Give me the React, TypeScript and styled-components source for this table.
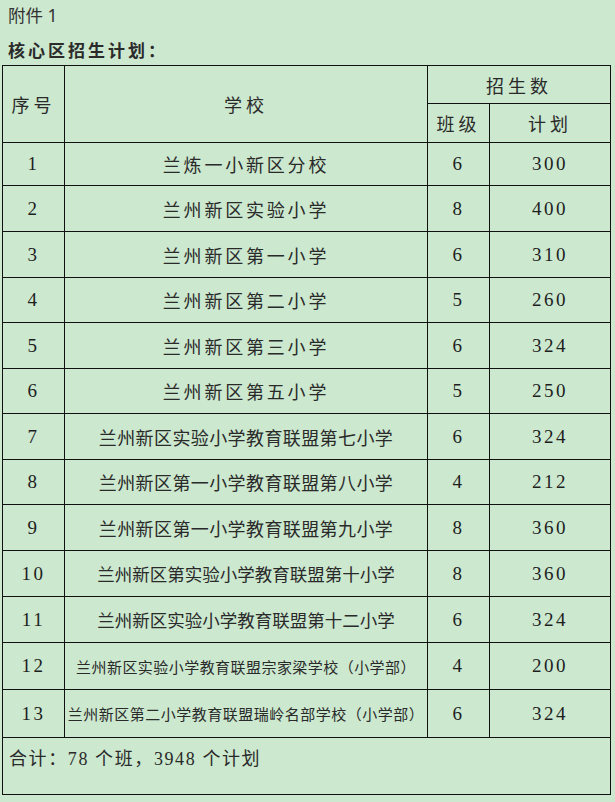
import React from "react";
import styled, { createGlobalStyle } from "styled-components";

const Global = createGlobalStyle`
  html, body {
    margin: 0;
    padding: 0;
    background: #cce8cf;
  }
  body {
    font-family: "Liberation Serif", "Noto Sans CJK SC", serif;
    color: #262626;
  }
`;

const Page = styled.div`
  width: 615px;
  height: 802px;
  background: #cce8cf;
  padding: 0 0 0 2px;
  box-sizing: border-box;
  display: flex;
  flex-direction: column;
`;

const Attach = styled.div`
  font-family: "Noto Sans", "Noto Sans CJK SC", sans-serif;
  font-size: 17.5px;
  line-height: 24px;
  height: 24px;
  padding: 3px 0 0 6px;
  color: #333;
`;

const Heading = styled.div`
  font-family: "Noto Sans CJK SC", sans-serif;
  font-weight: 700;
  font-size: 17px;
  letter-spacing: 3px;
  line-height: 24px;
  height: 24px;
  padding: 11px 0 3px 6px;
  color: #2b2b2b;
`;

const Table = styled.table`
  border-collapse: collapse;
  table-layout: fixed;
  width: 608px;
`;

const Cell = styled.td<{ $size?: number; $ls?: number; $align?: string }>`
  border: 1px solid #111;
  padding: 0;
  text-align: ${(p) => p.$align ?? "center"};
  vertical-align: middle;
  font-size: ${(p) => p.$size ?? 18}px;
  letter-spacing: ${(p) => p.$ls ?? 0}px;
  white-space: nowrap;
  overflow: hidden;
  color: #2a2a2a;
`;

const HeadCell = styled(Cell)`
  font-family: "Noto Sans CJK SC", sans-serif;
  font-size: 18px;
`;

const Num = styled(Cell)`
  font-family: "Liberation Serif", serif;
  font-size: 19px;
  letter-spacing: 2.5px;
  color: #1e1e1e;
`;

const Row = styled.tr<{ $h: number }>`
  height: ${(p) => p.$h}px;
`;

const FooterCell = styled.td`
  border: 1px solid #111;
  height: 57px;
  padding: 10px 0 0 6px;
  vertical-align: top;
  font-size: 18px;
  letter-spacing: 1.6px;
  line-height: 22px;
  color: #2a2a2a;
  box-sizing: border-box;
`;

type Item = {
  no: number;
  name: string;
  cls: number;
  plan: number;
  h: number;
  size: number;
  ls: number;
};

const items: Item[] = [
  { no: 1, name: "兰炼一小新区分校", cls: 6, plan: 300, h: 43, size: 18, ls: 2.8 },
  { no: 2, name: "兰州新区实验小学", cls: 8, plan: 400, h: 46, size: 18, ls: 2.8 },
  { no: 3, name: "兰州新区第一小学", cls: 6, plan: 310, h: 46, size: 18, ls: 2.8 },
  { no: 4, name: "兰州新区第二小学", cls: 5, plan: 260, h: 45, size: 18, ls: 2.8 },
  { no: 5, name: "兰州新区第三小学", cls: 6, plan: 324, h: 46, size: 18, ls: 2.8 },
  { no: 6, name: "兰州新区第五小学", cls: 5, plan: 250, h: 45, size: 18, ls: 2.8 },
  { no: 7, name: "兰州新区实验小学教育联盟第七小学", cls: 6, plan: 324, h: 46, size: 18, ls: 0.4 },
  { no: 8, name: "兰州新区第一小学教育联盟第八小学", cls: 4, plan: 212, h: 45, size: 18, ls: 0.4 },
  { no: 9, name: "兰州新区第一小学教育联盟第九小学", cls: 8, plan: 360, h: 46, size: 18, ls: 0.4 },
  { no: 10, name: "兰州新区第实验小学教育联盟第十小学", cls: 8, plan: 360, h: 46, size: 17.5, ls: 0 },
  { no: 11, name: "兰州新区实验小学教育联盟第十二小学", cls: 6, plan: 324, h: 46, size: 17.5, ls: 0 },
  { no: 12, name: "兰州新区实验小学教育联盟宗家梁学校（小学部）", cls: 4, plan: 200, h: 47, size: 15, ls: 0.45 },
  { no: 13, name: "兰州新区第二小学教育联盟瑞岭名部学校（小学部）", cls: 6, plan: 324, h: 48, size: 15, ls: 0.5 },
];

export default function App() {
  return (
    <Page>
      <Global />
      <Attach>附件 1</Attach>
      <Heading>核心区招生计划：</Heading>
      <Table>
        <colgroup>
          <col style={{ width: 62 }} />
          <col style={{ width: 363 }} />
          <col style={{ width: 62 }} />
          <col style={{ width: 121 }} />
        </colgroup>
        <thead>
          <Row $h={38}>
            <HeadCell rowSpan={2} $ls={4}>序号</HeadCell>
            <HeadCell rowSpan={2} $ls={4}>学校</HeadCell>
            <HeadCell colSpan={2} $ls={4}>招生数</HeadCell>
          </Row>
          <Row $h={39}>
            <HeadCell $ls={4}>班级</HeadCell>
            <HeadCell $ls={4}>计划</HeadCell>
          </Row>
        </thead>
        <tbody>
          {items.map((it) => (
            <Row key={it.no} $h={it.h}>
              <Num>{it.no}</Num>
              <Cell $size={it.size} $ls={it.ls}>
                {it.name}
              </Cell>
              <Num>{it.cls}</Num>
              <Num>{it.plan}</Num>
            </Row>
          ))}
          <tr>
            <FooterCell colSpan={4}>合计：78 个班，3948 个计划</FooterCell>
          </tr>
        </tbody>
      </Table>
    </Page>
  );
}
